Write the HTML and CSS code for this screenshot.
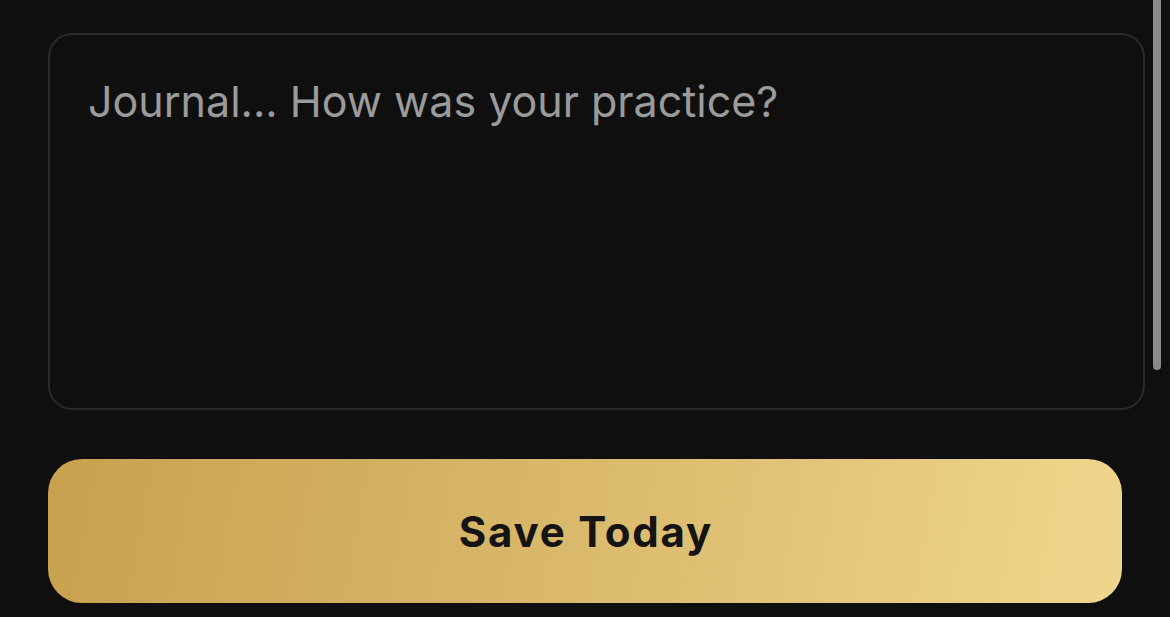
FILE: index.html
```html
<!DOCTYPE html>
<html lang="en">
<head>
  <meta charset="UTF-8">
  <meta name="viewport" content="width=device-width, initial-scale=1.0">
  <title>Journal</title>
  <link rel="stylesheet" href="styles.css">
</head>
<body>
  <main class="journal">
    <textarea class="journal-entry" placeholder="Journal... How was your practice?"></textarea>
    <button class="save-button">Save Today</button>
  </main>
  <div class="scroll-thumb"></div>
</body>
</html>
```

FILE: styles.css
```css
html, body {
  margin: 0;
  height: 100%;
  background-color: #0f0f0f;
  overflow: hidden;
}

body {
  font-family: Inter, "Noto Sans", sans-serif;
}

.journal {
  display: flex;
  flex-direction: column;
  align-items: flex-start;
  gap: 49px;
  padding: 33px 0 0 48px;
}

.journal-entry {
  box-sizing: border-box;
  width: 1097px;
  height: 377px;
  padding: 39px 38px 28px;
  background-color: #0f0f0f;
  border: 2px solid #2a2a2a;
  border-radius: 24px;
  color: #e0e0e0;
  font-family: inherit;
  font-size: 43px;
  line-height: 1.3;
  resize: none;
  outline: none;
}

.journal-entry::placeholder {
  color: #9b9b9b;
}

.save-button {
  width: 1074px;
  height: 144px;
  padding: 0;
  border: none;
  border-radius: 34px;
  background: linear-gradient(100deg, #c8a14e 0%, #d8b769 45%, #f0d68d 100%);
  color: #141414;
  font-family: inherit;
  font-size: 42px;
  font-weight: 700;
  letter-spacing: 1.8px;
  text-indent: 1.8px;
  cursor: pointer;
}

/* overlay scrollbar */
.scroll-thumb {
  position: absolute;
  top: -10px;
  right: 9px;
  width: 8px;
  height: 380px;
  border-radius: 4px;
  background-color: #8a8a8a;
}
```
